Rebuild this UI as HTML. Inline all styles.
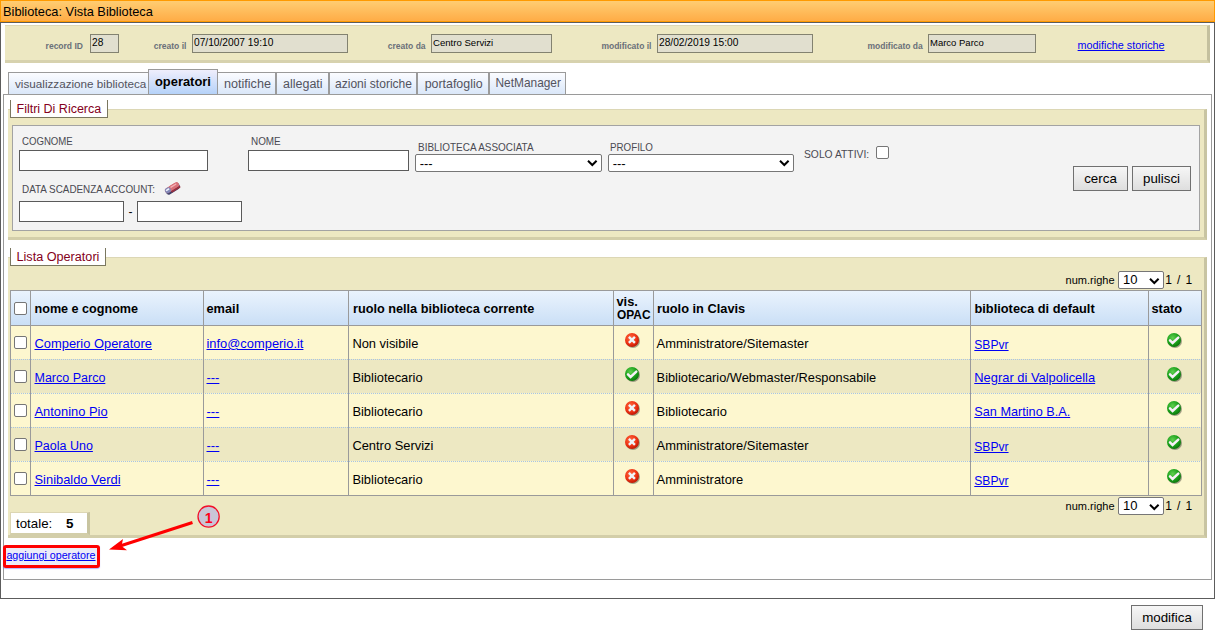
<!DOCTYPE html><html><head><meta charset="utf-8"><title>Biblioteca</title><style>
*{margin:0;padding:0;box-sizing:border-box}
html,body{width:1215px;height:632px;overflow:hidden;background:#fff}
body{position:relative;font-family:"Liberation Sans",sans-serif}
.t{position:absolute;white-space:nowrap}
.b{position:absolute}
a,.lnk{color:#0000f4;text-decoration:underline}
</style></head><body><div class="b" style="left:0px;top:0px;width:1215px;height:22px;border:1px solid #ff9a00;background:linear-gradient(#ffcd72,#ffac46)"></div>
<div class="t" style="left:3px;top:5.76px;font-size:12.8px;line-height:12.8px;font-weight:400;color:#000;">Biblioteca: Vista Biblioteca</div>
<div class="b" style="left:0px;top:22px;width:1215px;height:577px;border:1px solid #5c5c5c;border-top:1px solid #5c5c5c"></div>
<div class="b" style="left:5px;top:25px;width:1205px;height:38px;background:#ede8c2;border-top:1px solid #dcd7b5;border-right:3px solid #c4c09e;border-bottom:3px solid #d7d2ae"></div>
<div class="t" style="left:45.6px;top:41.80px;font-size:8.5px;line-height:8.5px;font-weight:700;color:#6a7079;">record ID</div>
<div class="t" style="left:153.8px;top:41.80px;font-size:8.5px;line-height:8.5px;font-weight:700;color:#6a7079;">creato il</div>
<div class="t" style="left:387.8px;top:41.80px;font-size:8.5px;line-height:8.5px;font-weight:700;color:#6a7079;">creato da</div>
<div class="t" style="left:601.4px;top:41.80px;font-size:8.5px;line-height:8.5px;font-weight:700;color:#6a7079;">modificato il</div>
<div class="t" style="left:867.5px;top:41.80px;font-size:8.5px;line-height:8.5px;font-weight:700;color:#6a7079;">modificato da</div>
<div class="b" style="left:90px;top:34px;width:29px;height:19px;background:#e1dfcf;border:1px solid #838270"></div>
<div class="t" style="left:92px;top:37.87px;font-size:10.2px;line-height:10.2px;font-weight:400;color:#000;">28</div>
<div class="b" style="left:192px;top:34px;width:156px;height:19px;background:#e1dfcf;border:1px solid #838270"></div>
<div class="t" style="left:194px;top:37.87px;font-size:10.2px;line-height:10.2px;font-weight:400;color:#000;">07/10/2007 19:10</div>
<div class="b" style="left:431px;top:34px;width:121px;height:19px;background:#e1dfcf;border:1px solid #838270"></div>
<div class="t" style="left:433px;top:38.07px;font-size:9.6px;line-height:9.6px;font-weight:400;color:#000;">Centro Servizi</div>
<div class="b" style="left:657px;top:34px;width:156px;height:19px;background:#e1dfcf;border:1px solid #838270"></div>
<div class="t" style="left:659px;top:37.87px;font-size:10.2px;line-height:10.2px;font-weight:400;color:#000;">28/02/2019 15:00</div>
<div class="b" style="left:928px;top:34px;width:108px;height:19px;background:#e1dfcf;border:1px solid #838270"></div>
<div class="t" style="left:930px;top:38.16px;font-size:9.5px;line-height:9.5px;font-weight:400;color:#000;">Marco Parco</div>
<div class="t" style="left:1077.6px;top:40.46px;font-size:10.8px;line-height:10.8px;font-weight:400;color:#0000f4;text-decoration:underline">modifiche storiche</div>
<div class="b" style="left:3px;top:94px;width:1209px;height:486px;border:1px solid #9a9a9a"></div>
<div class="b" style="left:8px;top:72px;width:141px;height:22px;border:1px solid #9a9a9a;border-bottom:none;background:linear-gradient(#fbfcff,#dae7f9)"></div>
<div class="t" style="left:15px;top:78.40px;font-size:11.7px;line-height:11.7px;font-weight:400;color:#53535e;">visualizzazione biblioteca</div>
<div class="b" style="left:217px;top:72px;width:59px;height:22px;border:1px solid #9a9a9a;border-bottom:none;background:linear-gradient(#fbfcff,#dae7f9)"></div>
<div class="t" style="left:224px;top:77.63px;font-size:12.6px;line-height:12.6px;font-weight:400;color:#53535e;">notifiche</div>
<div class="b" style="left:276px;top:72px;width:53px;height:22px;border:1px solid #9a9a9a;border-bottom:none;background:linear-gradient(#fbfcff,#dae7f9)"></div>
<div class="t" style="left:283px;top:77.72px;font-size:12.5px;line-height:12.5px;font-weight:400;color:#53535e;">allegati</div>
<div class="b" style="left:329px;top:72px;width:88px;height:22px;border:1px solid #9a9a9a;border-bottom:none;background:linear-gradient(#fbfcff,#dae7f9)"></div>
<div class="t" style="left:335px;top:78.10px;font-size:12.05px;line-height:12.05px;font-weight:400;color:#53535e;">azioni storiche</div>
<div class="b" style="left:417px;top:72px;width:72px;height:22px;border:1px solid #9a9a9a;border-bottom:none;background:linear-gradient(#fbfcff,#dae7f9)"></div>
<div class="t" style="left:424.7px;top:77.80px;font-size:12.4px;line-height:12.4px;font-weight:400;color:#53535e;">portafoglio</div>
<div class="b" style="left:489px;top:72px;width:77px;height:22px;border:1px solid #9a9a9a;border-bottom:none;background:linear-gradient(#fbfcff,#dae7f9)"></div>
<div class="t" style="left:495.5px;top:78.23px;font-size:11.9px;line-height:11.9px;font-weight:400;color:#53535e;">NetManager</div>
<div class="b" style="left:148px;top:69px;width:70px;height:26px;border:1px solid #9a9a9a;border-bottom:1px solid #9a9a9a;background:linear-gradient(#efeefc,#b5d2f9)"></div>
<div class="t" style="left:155px;top:76.28px;font-size:12.9px;line-height:12.9px;font-weight:700;color:#000;">operatori</div>
<div class="b" style="left:8px;top:109px;width:1199px;height:131px;background:#ede8c2;border-top:1px solid #dcd7b5;border-right:3px solid #c8c4a2;border-bottom:3px solid #d3cea9"></div>
<div class="b" style="left:10px;top:100px;width:98px;height:18px;background:#fff;border-left:1px solid #7a775f;border-right:1px solid #7a775f;border-bottom:1px solid #7a775f"></div>
<div class="t" style="left:16.5px;top:102.82px;font-size:12.5px;line-height:12.5px;font-weight:400;color:#840020;">Filtri Di Ricerca</div>
<div class="b" style="left:12px;top:125px;width:1188px;height:106px;background:#f3f3f3;border:1px solid #a3a3a3"></div>
<div class="t" style="left:22.3px;top:135.69px;font-size:11px;line-height:11px;font-weight:400;color:#4a4a52;transform:scaleX(0.874);transform-origin:left">COGNOME</div>
<div class="b" style="left:19px;top:150px;width:189px;height:21px;background:#fff;border:1px solid #5a5a5a"></div>
<div class="t" style="left:251.3px;top:135.69px;font-size:11px;line-height:11px;font-weight:400;color:#4a4a52;transform:scaleX(0.9);transform-origin:left">NOME</div>
<div class="b" style="left:248px;top:150px;width:161px;height:21px;background:#fff;border:1px solid #5a5a5a"></div>
<div class="t" style="left:417.5px;top:141.69px;font-size:11px;line-height:11px;font-weight:400;color:#4a4a52;transform:scaleX(0.903);transform-origin:left">BIBLIOTECA ASSOCIATA</div>
<div class="t" style="left:609.7px;top:141.69px;font-size:11px;line-height:11px;font-weight:400;color:#4a4a52;transform:scaleX(0.888);transform-origin:left">PROFILO</div>
<div class="b" style="left:415px;top:154px;width:187px;height:18px;background:#fff;border:1px solid #767676;border-radius:2px"></div>
<div class="t" style="left:419.7px;top:157.00px;font-size:13px;line-height:13px;font-weight:400;color:#000;">---</div>
<svg class="b" style="left:587px;top:159px" width="11" height="8" viewBox="0 0 11 8"><path d="M1 1.8 L5.3 6 L9.6 1.8" fill="none" stroke="#000" stroke-width="2"/></svg>
<div class="b" style="left:608px;top:154px;width:186px;height:18px;background:#fff;border:1px solid #767676;border-radius:2px"></div>
<div class="t" style="left:612.7px;top:157.00px;font-size:13px;line-height:13px;font-weight:400;color:#000;">---</div>
<svg class="b" style="left:779px;top:159px" width="11" height="8" viewBox="0 0 11 8"><path d="M1 1.8 L5.3 6 L9.6 1.8" fill="none" stroke="#000" stroke-width="2"/></svg>
<div class="t" style="left:803.7px;top:149.39px;font-size:11px;line-height:11px;font-weight:400;color:#4a4a52;transform:scaleX(0.937);transform-origin:left">SOLO ATTIVI:</div>
<div class="b" style="left:876px;top:146px;width:13px;height:13px;background:#fff;border:1px solid #767676;border-radius:2px"></div>
<div class="t" style="left:22.2px;top:183.89px;font-size:11px;line-height:11px;font-weight:400;color:#4a4a52;transform:scaleX(0.898);transform-origin:left">DATA SCADENZA ACCOUNT:</div>
<svg class="b" style="left:163px;top:181px" width="19" height="16" viewBox="0 0 19 16"><g transform="rotate(-32 9.5 8)"><rect x="2" y="4.6" width="15.5" height="6.6" rx="2.8" fill="#40426a"/><rect x="2" y="4" width="15.5" height="5.2" rx="2.5" fill="#d06870"/><rect x="6.5" y="4" width="11" height="5.2" rx="2.5" fill="#d87078"/><rect x="7" y="9" width="10.5" height="2" rx="1" fill="#983040"/><rect x="2" y="4" width="6" height="5.2" rx="2.5" fill="#8288b8"/><rect x="3" y="5.2" width="4" height="1.6" rx="0.8" fill="#eef0fa"/><rect x="8.5" y="5" width="7" height="1.4" rx="0.7" fill="#f4b0b6"/></g></svg>
<div class="b" style="left:19px;top:201px;width:105px;height:21px;background:#fff;border:1px solid #5a5a5a"></div>
<div class="t" style="left:128.5px;top:205.84px;font-size:12px;line-height:12px;font-weight:400;color:#000;">-</div>
<div class="b" style="left:137px;top:201px;width:105px;height:21px;background:#fff;border:1px solid #5a5a5a"></div>
<div class="b" style="left:1073px;top:166px;width:55px;height:25px;border:1px solid #707070;background:linear-gradient(#f6f6f6,#dedede);font-size:13.33px;line-height:23px;text-align:center;color:#000">cerca</div>
<div class="b" style="left:1132px;top:166px;width:59px;height:25px;border:1px solid #707070;background:linear-gradient(#f6f6f6,#dedede);font-size:13.33px;line-height:23px;text-align:center;color:#000">pulisci</div>
<div class="b" style="left:8px;top:257px;width:1199px;height:281px;background:#ede8c2;border-top:1px solid #dcd7b5;border-right:3px solid #c8c4a2;border-bottom:3px solid #d3cea9"></div>
<div class="b" style="left:10px;top:248px;width:96px;height:18px;background:#fff;border-left:1px solid #7a775f;border-right:1px solid #7a775f;border-bottom:1px solid #7a775f"></div>
<div class="t" style="left:16.5px;top:250.89px;font-size:12.65px;line-height:12.65px;font-weight:400;color:#840020;">Lista Operatori</div>
<div class="t" style="left:1065.6px;top:275.09px;font-size:11px;line-height:11px;font-weight:400;color:#000;">num.righe</div>
<div class="b" style="left:1118px;top:271px;width:46px;height:18px;background:#fff;border:1px solid #767676;border-radius:2px"></div>
<div class="t" style="left:1123px;top:273.40px;font-size:13px;line-height:13px;font-weight:400;color:#000;">10</div>
<svg class="b" style="left:1149px;top:277px" width="11" height="8" viewBox="0 0 11 8"><path d="M1 1.8 L5.3 6 L9.6 1.8" fill="none" stroke="#000" stroke-width="2"/></svg>
<div class="t" style="left:1165.2px;top:274.24px;font-size:12px;line-height:12px;font-weight:400;color:#000;word-spacing:1.8px">1 / 1</div>
<div class="t" style="left:1065.6px;top:500.59px;font-size:11px;line-height:11px;font-weight:400;color:#000;">num.righe</div>
<div class="b" style="left:1118px;top:496.5px;width:46px;height:18.0px;background:#fff;border:1px solid #767676;border-radius:2px"></div>
<div class="t" style="left:1123px;top:498.90px;font-size:13px;line-height:13px;font-weight:400;color:#000;">10</div>
<svg class="b" style="left:1149px;top:502.5px" width="11" height="8" viewBox="0 0 11 8"><path d="M1 1.8 L5.3 6 L9.6 1.8" fill="none" stroke="#000" stroke-width="2"/></svg>
<div class="t" style="left:1165.2px;top:499.74px;font-size:12px;line-height:12px;font-weight:400;color:#000;word-spacing:1.8px">1 / 1</div>
<div class="b" style="left:10px;top:290px;width:1192px;height:206px;border:1px solid #9a9a9a"></div>
<div class="b" style="left:11px;top:291px;width:1190px;height:34px;background:linear-gradient(#eaf3fd,#cadff6)"></div>
<div class="b" style="left:11px;top:325px;width:1190px;height:34px;background:#fdf7cf"></div>
<div class="b" style="left:11px;top:359px;width:1190px;height:34px;background:#ede8c2"></div>
<div class="b" style="left:11px;top:393px;width:1190px;height:34px;background:#fdf7cf"></div>
<div class="b" style="left:11px;top:427px;width:1190px;height:34px;background:#ede8c2"></div>
<div class="b" style="left:11px;top:461px;width:1190px;height:34px;background:#fdf7cf"></div>
<div class="b" style="left:11px;top:325px;width:1190px;height:1px;background:#9a9a9a"></div>
<div class="b" style="left:11px;top:359px;width:1190px;height:1px;background-image:linear-gradient(90deg,#a8c4e4 50%,transparent 50%);background-size:2px 1px"></div>
<div class="b" style="left:11px;top:393px;width:1190px;height:1px;background-image:linear-gradient(90deg,#a8c4e4 50%,transparent 50%);background-size:2px 1px"></div>
<div class="b" style="left:11px;top:427px;width:1190px;height:1px;background-image:linear-gradient(90deg,#a8c4e4 50%,transparent 50%);background-size:2px 1px"></div>
<div class="b" style="left:11px;top:461px;width:1190px;height:1px;background-image:linear-gradient(90deg,#a8c4e4 50%,transparent 50%);background-size:2px 1px"></div>
<div class="b" style="left:30px;top:291px;width:1px;height:204px;background:#9a9a9a"></div>
<div class="b" style="left:203px;top:291px;width:1px;height:204px;background:#9a9a9a"></div>
<div class="b" style="left:348px;top:291px;width:1px;height:204px;background:#9a9a9a"></div>
<div class="b" style="left:613px;top:291px;width:1px;height:204px;background:#9a9a9a"></div>
<div class="b" style="left:653px;top:291px;width:1px;height:204px;background:#9a9a9a"></div>
<div class="b" style="left:970px;top:291px;width:1px;height:204px;background:#9a9a9a"></div>
<div class="b" style="left:1148px;top:291px;width:1px;height:204px;background:#9a9a9a"></div>
<div class="t" style="left:34.5px;top:302.93px;font-size:12.6px;line-height:12.6px;font-weight:700;color:#000;">nome e cognome</div>
<div class="t" style="left:206.5px;top:302.76px;font-size:12.8px;line-height:12.8px;font-weight:700;color:#000;">email</div>
<div class="t" style="left:353px;top:302.85px;font-size:12.7px;line-height:12.7px;font-weight:700;color:#000;">ruolo nella biblioteca corrente</div>
<div class="t" style="left:616.5px;top:296.16px;font-size:12.8px;line-height:12.8px;font-weight:700;color:#000;">vis.</div>
<div class="t" style="left:616.5px;top:309.16px;font-size:12.8px;line-height:12.8px;font-weight:700;color:#000;transform:scaleX(0.93);transform-origin:left">OPAC</div>
<div class="t" style="left:657px;top:302.76px;font-size:12.8px;line-height:12.8px;font-weight:700;color:#000;">ruolo in Clavis</div>
<div class="t" style="left:974.5px;top:302.76px;font-size:12.8px;line-height:12.8px;font-weight:700;color:#000;">biblioteca di default</div>
<div class="t" style="left:1151.5px;top:302.76px;font-size:12.8px;line-height:12.8px;font-weight:700;color:#000;">stato</div>
<div class="b" style="left:14px;top:302px;width:13px;height:13px;background:#fff;border:1px solid #767676;border-radius:2px"></div>
<svg width="0" height="0" style="position:absolute"><defs><radialGradient id="gx" cx="0.4" cy="0.35" r="0.7"><stop offset="0" stop-color="#ff6a40"/><stop offset="0.6" stop-color="#ee3414"/><stop offset="1" stop-color="#b81404"/></radialGradient><radialGradient id="gv" cx="0.4" cy="0.35" r="0.7"><stop offset="0" stop-color="#60d050"/><stop offset="0.6" stop-color="#1aa01a"/><stop offset="1" stop-color="#0a700a"/></radialGradient></defs></svg>
<div class="b" style="left:14px;top:336px;width:13px;height:13px;background:#fff;border:1px solid #767676;border-radius:2px"></div>
<div class="t" style="left:34.5px;top:337.88px;font-size:12.9px;line-height:12.9px;font-weight:400;color:#0000f4;text-decoration:underline">Comperio Operatore</div>
<div class="t" style="left:206.5px;top:337.88px;font-size:12.9px;line-height:12.9px;font-weight:400;color:#0000f4;text-decoration:underline">info@comperio.it</div>
<div class="t" style="left:352.4px;top:337.88px;font-size:12.9px;line-height:12.9px;font-weight:400;color:#000;">Non visibile</div>
<svg class="b" style="left:624px;top:332px" width="18" height="18" viewBox="0 0 18 18"><circle cx="9" cy="9" r="7" fill="#3a4a30" opacity="0.45"/><circle cx="8" cy="8" r="7" fill="url(#gx)"/><path d="M4.9 4.9 L10.9 10.9 M10.9 4.9 L4.9 10.9" stroke="#eef4f8" stroke-width="2.4" stroke-linecap="butt"/></svg>
<div class="t" style="left:656.6px;top:337.88px;font-size:12.9px;line-height:12.9px;font-weight:400;color:#000;">Amministratore/Sitemaster</div>
<div class="t" style="left:974.3px;top:338.56px;font-size:12.1px;line-height:12.1px;font-weight:400;color:#0000f4;text-decoration:underline">SBPvr</div>
<svg class="b" style="left:1166px;top:332px" width="18" height="18" viewBox="0 0 18 18"><circle cx="9" cy="9" r="7" fill="#3a3a30" opacity="0.45"/><circle cx="8" cy="8" r="7" fill="url(#gv)"/><path d="M4 8.3 L6.6 11 L12.3 5.6" fill="none" stroke="#f8f0f8" stroke-width="2.5" stroke-linecap="round"/></svg>
<div class="b" style="left:14px;top:370px;width:13px;height:13px;background:#fff;border:1px solid #767676;border-radius:2px"></div>
<div class="t" style="left:34.5px;top:372.22px;font-size:12.5px;line-height:12.5px;font-weight:400;color:#0000f4;text-decoration:underline">Marco Parco</div>
<div class="t" style="left:206.5px;top:371.88px;font-size:12.9px;line-height:12.9px;font-weight:400;color:#0000f4;text-decoration:underline">---</div>
<div class="t" style="left:352.4px;top:371.88px;font-size:12.9px;line-height:12.9px;font-weight:400;color:#000;">Bibliotecario</div>
<svg class="b" style="left:624px;top:366px" width="18" height="18" viewBox="0 0 18 18"><circle cx="9" cy="9" r="7" fill="#3a3a30" opacity="0.45"/><circle cx="8" cy="8" r="7" fill="url(#gv)"/><path d="M4 8.3 L6.6 11 L12.3 5.6" fill="none" stroke="#f8f0f8" stroke-width="2.5" stroke-linecap="round"/></svg>
<div class="t" style="left:656.6px;top:371.96px;font-size:12.8px;line-height:12.8px;font-weight:400;color:#000;">Bibliotecario/Webmaster/Responsabile</div>
<div class="t" style="left:974.3px;top:371.88px;font-size:12.9px;line-height:12.9px;font-weight:400;color:#0000f4;text-decoration:underline">Negrar di Valpolicella</div>
<svg class="b" style="left:1166px;top:366px" width="18" height="18" viewBox="0 0 18 18"><circle cx="9" cy="9" r="7" fill="#3a3a30" opacity="0.45"/><circle cx="8" cy="8" r="7" fill="url(#gv)"/><path d="M4 8.3 L6.6 11 L12.3 5.6" fill="none" stroke="#f8f0f8" stroke-width="2.5" stroke-linecap="round"/></svg>
<div class="b" style="left:14px;top:404px;width:13px;height:13px;background:#fff;border:1px solid #767676;border-radius:2px"></div>
<div class="t" style="left:34.5px;top:405.88px;font-size:12.9px;line-height:12.9px;font-weight:400;color:#0000f4;text-decoration:underline">Antonino Pio</div>
<div class="t" style="left:206.5px;top:405.88px;font-size:12.9px;line-height:12.9px;font-weight:400;color:#0000f4;text-decoration:underline">---</div>
<div class="t" style="left:352.4px;top:405.88px;font-size:12.9px;line-height:12.9px;font-weight:400;color:#000;">Bibliotecario</div>
<svg class="b" style="left:624px;top:400px" width="18" height="18" viewBox="0 0 18 18"><circle cx="9" cy="9" r="7" fill="#3a4a30" opacity="0.45"/><circle cx="8" cy="8" r="7" fill="url(#gx)"/><path d="M4.9 4.9 L10.9 10.9 M10.9 4.9 L4.9 10.9" stroke="#eef4f8" stroke-width="2.4" stroke-linecap="butt"/></svg>
<div class="t" style="left:656.6px;top:405.88px;font-size:12.9px;line-height:12.9px;font-weight:400;color:#000;">Bibliotecario</div>
<div class="t" style="left:974.3px;top:406.05px;font-size:12.7px;line-height:12.7px;font-weight:400;color:#0000f4;text-decoration:underline">San Martino B.A.</div>
<svg class="b" style="left:1166px;top:400px" width="18" height="18" viewBox="0 0 18 18"><circle cx="9" cy="9" r="7" fill="#3a3a30" opacity="0.45"/><circle cx="8" cy="8" r="7" fill="url(#gv)"/><path d="M4 8.3 L6.6 11 L12.3 5.6" fill="none" stroke="#f8f0f8" stroke-width="2.5" stroke-linecap="round"/></svg>
<div class="b" style="left:14px;top:438px;width:13px;height:13px;background:#fff;border:1px solid #767676;border-radius:2px"></div>
<div class="t" style="left:34.5px;top:440.22px;font-size:12.5px;line-height:12.5px;font-weight:400;color:#0000f4;text-decoration:underline">Paola Uno</div>
<div class="t" style="left:206.5px;top:439.88px;font-size:12.9px;line-height:12.9px;font-weight:400;color:#0000f4;text-decoration:underline">---</div>
<div class="t" style="left:352.4px;top:439.88px;font-size:12.9px;line-height:12.9px;font-weight:400;color:#000;">Centro Servizi</div>
<svg class="b" style="left:624px;top:434px" width="18" height="18" viewBox="0 0 18 18"><circle cx="9" cy="9" r="7" fill="#3a4a30" opacity="0.45"/><circle cx="8" cy="8" r="7" fill="url(#gx)"/><path d="M4.9 4.9 L10.9 10.9 M10.9 4.9 L4.9 10.9" stroke="#eef4f8" stroke-width="2.4" stroke-linecap="butt"/></svg>
<div class="t" style="left:656.6px;top:439.88px;font-size:12.9px;line-height:12.9px;font-weight:400;color:#000;">Amministratore/Sitemaster</div>
<div class="t" style="left:974.3px;top:440.56px;font-size:12.1px;line-height:12.1px;font-weight:400;color:#0000f4;text-decoration:underline">SBPvr</div>
<svg class="b" style="left:1166px;top:434px" width="18" height="18" viewBox="0 0 18 18"><circle cx="9" cy="9" r="7" fill="#3a3a30" opacity="0.45"/><circle cx="8" cy="8" r="7" fill="url(#gv)"/><path d="M4 8.3 L6.6 11 L12.3 5.6" fill="none" stroke="#f8f0f8" stroke-width="2.5" stroke-linecap="round"/></svg>
<div class="b" style="left:14px;top:472px;width:13px;height:13px;background:#fff;border:1px solid #767676;border-radius:2px"></div>
<div class="t" style="left:34.5px;top:473.88px;font-size:12.9px;line-height:12.9px;font-weight:400;color:#0000f4;text-decoration:underline">Sinibaldo Verdi</div>
<div class="t" style="left:206.5px;top:473.88px;font-size:12.9px;line-height:12.9px;font-weight:400;color:#0000f4;text-decoration:underline">---</div>
<div class="t" style="left:352.4px;top:473.88px;font-size:12.9px;line-height:12.9px;font-weight:400;color:#000;">Bibliotecario</div>
<svg class="b" style="left:624px;top:468px" width="18" height="18" viewBox="0 0 18 18"><circle cx="9" cy="9" r="7" fill="#3a4a30" opacity="0.45"/><circle cx="8" cy="8" r="7" fill="url(#gx)"/><path d="M4.9 4.9 L10.9 10.9 M10.9 4.9 L4.9 10.9" stroke="#eef4f8" stroke-width="2.4" stroke-linecap="butt"/></svg>
<div class="t" style="left:656.6px;top:473.88px;font-size:12.9px;line-height:12.9px;font-weight:400;color:#000;">Amministratore</div>
<div class="t" style="left:974.3px;top:474.56px;font-size:12.1px;line-height:12.1px;font-weight:400;color:#0000f4;text-decoration:underline">SBPvr</div>
<svg class="b" style="left:1166px;top:468px" width="18" height="18" viewBox="0 0 18 18"><circle cx="9" cy="9" r="7" fill="#3a3a30" opacity="0.45"/><circle cx="8" cy="8" r="7" fill="url(#gv)"/><path d="M4 8.3 L6.6 11 L12.3 5.6" fill="none" stroke="#f8f0f8" stroke-width="2.5" stroke-linecap="round"/></svg>
<div class="b" style="left:10px;top:512px;width:80px;height:23px;background:#fff;border-top:1px solid #dcd6b4;border-left:1px solid #dcd6b4;border-right:3px solid #c8c4a0;border-bottom:2px solid #d3cea9"></div>
<div class="t" style="left:16px;top:517.04px;font-size:13.3px;line-height:13.3px;font-weight:400;color:#000;">totale:</div>
<div class="t" style="left:65.9px;top:517.26px;font-size:13.4px;line-height:13.4px;font-weight:700;color:#000;">5</div>
<div class="b" style="left:3px;top:545px;width:97px;height:23px;border:3px solid #ff0000;border-radius:3px;background:#ecebf8;box-shadow:0 1px 1px rgba(90,90,255,0.45)"></div>
<div class="t" style="left:6.4px;top:550.24px;font-size:10.7px;line-height:10.7px;font-weight:400;color:#0000f4;text-decoration:underline">aggiungi operatore</div>
<svg class="b" style="left:100px;top:500px" width="130" height="60" viewBox="0 0 130 60"><path d="M92.5 22.5 L20 46" stroke="#ff0000" stroke-width="3"/><path d="M9 49.5 L23 39 L21.5 46 L27 50.3 Z" fill="#ff0000"/><circle cx="108.6" cy="16.6" r="10.6" fill="#c9c5d6" stroke="#f2102a" stroke-width="1.3"/><text x="108.6" y="22.5" font-family="Liberation Sans" font-size="14" font-weight="700" fill="#ff0018" text-anchor="middle">1</text></svg>
<div class="b" style="left:1131px;top:605px;width:72px;height:25px;border:1px solid #707070;background:linear-gradient(#f6f6f6,#dedede);font-size:13.33px;line-height:23px;text-align:center;color:#000">modifica</div></body></html>
